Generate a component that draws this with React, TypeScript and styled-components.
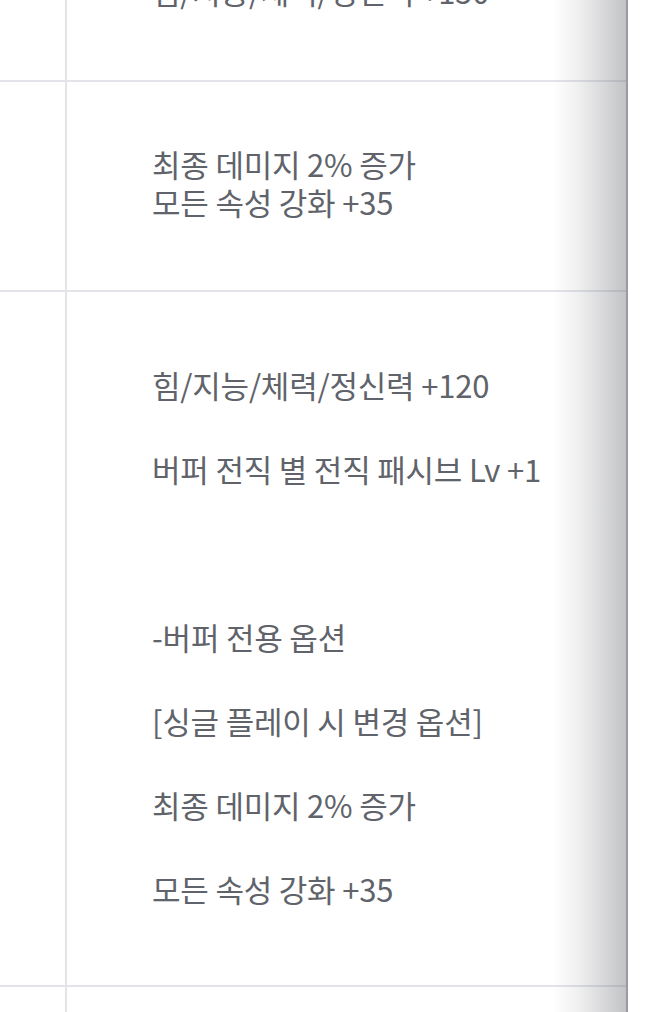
import styled, { createGlobalStyle } from "styled-components";

const GlobalStyle = createGlobalStyle`
  html, body {
    margin: 0;
    padding: 0;
    background: #fff;
  }

  body {
    font-family: "Noto Sans CJK KR", "Noto Sans", sans-serif;
  }
`;

type Block = { lines: string[]; top: number; bottom: number; gap: number };

const rows: Block[] = [
  {
    lines: ["최종 데미지 2% 증가", "힘/지능/체력/정신력 +150"],
    top: 62,
    bottom: 70,
    gap: 0,
  },
  {
    lines: ["최종 데미지 2% 증가", "모든 속성 강화 +35"],
    top: 63,
    bottom: 69,
    gap: 0,
  },
  {
    lines: [
      "힘/지능/체력/정신력 +120",
      "버퍼 전직 별 전직 패시브 Lv +1",
      "",
      "-버퍼 전용 옵션",
      "[싱글 플레이 시 변경 옵션]",
      "최종 데미지 2% 증가",
      "모든 속성 강화 +35",
    ],
    top: 74,
    bottom: 77,
    gap: 46,
  },
  {
    lines: ["모든 속성 강화 +35"],
    top: 70,
    bottom: 70,
    gap: 0,
  },
];

const App = () => {
  return (
    <>
      <GlobalStyle />
      <Page>
        <TableWrap>
          {rows.map((row, i) => (
            <Row key={i}>
              <LabelCell />
              <ValueCell $top={row.top} $bottom={row.bottom} $gap={row.gap}>
                {row.lines.map((line, j) => (
                  <Line key={j}>{line || "\u00a0"}</Line>
                ))}
              </ValueCell>
            </Row>
          ))}
          <ScrollShadow />
        </TableWrap>
      </Page>
    </>
  );
};

const Page = styled.div`
  width: 662px;
  height: 1012px;
  overflow: hidden;
  background: #fff;
`;

const TableWrap = styled.div`
  position: relative;
  width: 628px;
  margin-top: -128px;
`;

const Row = styled.div`
  display: grid;
  grid-template-columns: 67px 1fr;
  border-bottom: 2px solid #e3e4e9;
`;

const LabelCell = styled.div`
  border-right: 2px solid #e3e4e9;
`;

const ValueCell = styled.div<{ $top: number; $bottom: number; $gap: number }>`
  display: flex;
  flex-direction: column;
  gap: ${(p) => p.$gap}px;
  padding: ${(p) => p.$top}px 0 ${(p) => p.$bottom}px 85px;
  color: #60636a;
  font-size: 31px;
  line-height: 38px;
  letter-spacing: -0.2px;
  white-space: nowrap;
`;

const Line = styled.p`
  margin: 0;
`;

const ScrollShadow = styled.div`
  position: absolute;
  top: 0;
  right: 0;
  bottom: 0;
  width: 74px;
  pointer-events: none;
  background: linear-gradient(
    to right,
    rgba(110, 112, 118, 0) 0%,
    rgba(110, 112, 118, 0.1) 35%,
    rgba(110, 112, 118, 0.42) 100%
  );
  border-right: 2px solid #9a9ba1;
`;

export default App;
